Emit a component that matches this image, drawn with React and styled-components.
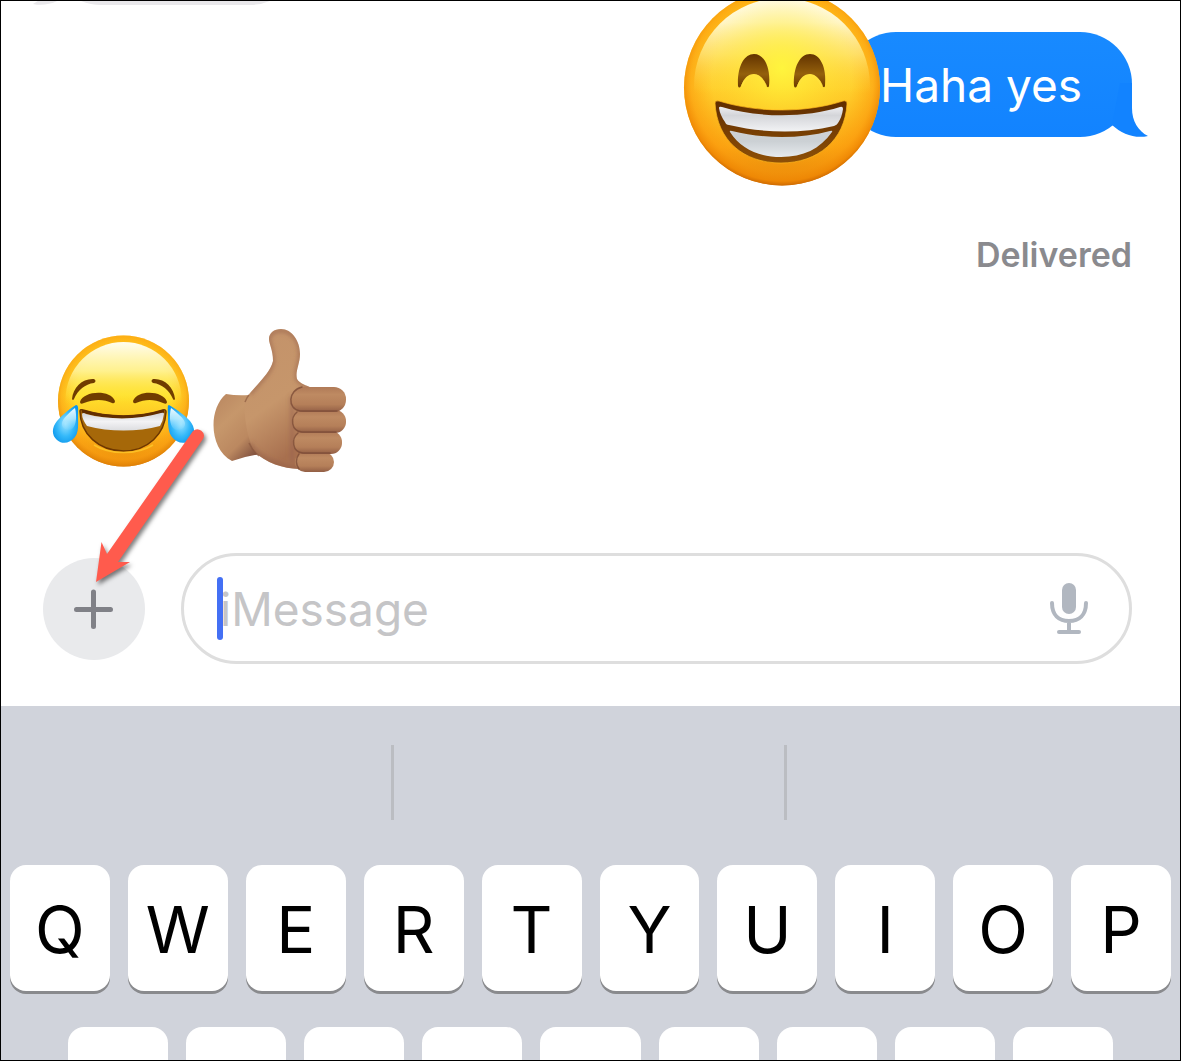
import React from "react";
import styled, { createGlobalStyle } from "styled-components";

const topRow = ["Q", "W", "E", "R", "T", "Y", "U", "I", "O", "P"];
const homeRow = ["A", "S", "D", "F", "G", "H", "J", "K", "L"];

const Tail = ({ color, incoming }) => (
  <TailSvg $incoming={incoming} viewBox="0 0 50 54" aria-hidden="true">
    <path
      fill={color}
      d="M20 0 H32 V25 C32 38 38 48 48 53 C35 56 22 51 12 42 Z"
    />
  </TailSvg>
);

const GrinningFace = () => (
  <Sticker viewBox="683 -11 198 198" role="img" aria-label="Grinning face">
    <defs>
      <linearGradient id="grinBase" x1="0" y1="0" x2="0" y2="1">
        <stop offset="0" stopColor="#ffc21a" />
        <stop offset="0.5" stopColor="#ffcf2c" />
        <stop offset="0.8" stopColor="#fbab16" />
        <stop offset="1" stopColor="#d87c08" />
      </linearGradient>
      <radialGradient id="grinEdge" cx="0.5" cy="0.47" r="0.54">
        <stop offset="0.66" stopColor="#ff9d0a" stopOpacity="0" />
        <stop offset="0.86" stopColor="#fb960a" stopOpacity="0.55" />
        <stop offset="0.94" stopColor="#f08804" stopOpacity="0.9" />
        <stop offset="1" stopColor="#c05c00" />
      </radialGradient>
      <linearGradient id="grinGlow" x1="0" y1="0" x2="0" y2="1">
        <stop offset="0" stopColor="#fffdf0" />
        <stop offset="0.14" stopColor="#fff9d0" stopOpacity="0.95" />
        <stop offset="0.32" stopColor="#fff08c" stopOpacity="0.65" />
        <stop offset="0.54" stopColor="#ffdc45" stopOpacity="0" />
      </linearGradient>
      <radialGradient id="grinWarm" cx="0.5" cy="0.4" r="0.38">
        <stop offset="0" stopColor="#fff83c" stopOpacity="0.9" />
        <stop offset="1" stopColor="#ffe230" stopOpacity="0" />
      </radialGradient>
      <linearGradient id="grinEye" x1="0" y1="0" x2="0" y2="1">
        <stop offset="0" stopColor="#623300" />
        <stop offset="0.6" stopColor="#94600c" />
        <stop offset="1" stopColor="#6b3900" />
      </linearGradient>
      <linearGradient id="grinMouth" x1="0" y1="0" x2="0" y2="1">
        <stop offset="0" stopColor="#602d00" />
        <stop offset="1" stopColor="#8e5007" />
      </linearGradient>
      <linearGradient id="grinUpper" x1="0" y1="0" x2="0" y2="1">
        <stop offset="0" stopColor="#eeeef1" />
        <stop offset="0.35" stopColor="#d4d5d9" />
        <stop offset="0.7" stopColor="#e4e5e8" />
        <stop offset="1" stopColor="#f2f3f5" />
      </linearGradient>
      <linearGradient id="grinLower" x1="0" y1="0" x2="0" y2="1">
        <stop offset="0" stopColor="#cfd1d4" />
        <stop offset="0.4" stopColor="#cbd0d4" />
        <stop offset="1" stopColor="#e6eaed" />
      </linearGradient>
    </defs>
    <circle cx="782" cy="87.5" r="98" fill="url(#grinBase)" />
    <circle cx="782" cy="87.5" r="98" fill="url(#grinEdge)" />
    <ellipse cx="782" cy="86" rx="88" ry="88" fill="url(#grinGlow)" />
    <circle cx="782" cy="87.5" r="98" fill="url(#grinWarm)" />
    <g fill="url(#grinEye)">
      <path d="M738 86 C737 67 744 54 754 54 C764 54 771 67 769 86 Q768 89 766 85 C763 78 759 74 754 74 C748 74 744 78 741 86 Q739 89 738 86 Z" />
      <path d="M794 86 C793 67 800 54 810 54 C820 54 827 67 825 86 Q824 89 822 85 C819 78 815 74 810 74 C804 74 800 78 797 86 Q795 89 794 86 Z" />
    </g>
    <path
      fill="none"
      stroke="#ffe23d"
      strokeWidth="2"
      strokeOpacity="0.8"
      d="M742 86 C748 72 760 72 766 86 M798 86 C804 72 816 72 822 86"
    />
    <path
      fill="url(#grinMouth)"
      stroke="#ffb81e"
      strokeOpacity="0.7"
      d="M715 103 Q715 100 719 101 C758 113 806 113 843 101 Q847 100 847 104 C845 140 818 163 781 163 C743 163 717 140 715 103 Z"
    />
    <path
      fill="url(#grinUpper)"
      d="M719 108 Q719 106 722 107 C758 118 806 118 840 107 Q843 106 843 109 Q842 117 838 123 Q837 125 834 126 C800 134 763 133 729 125 Q726 125 725 122 Q720 115 719 108 Z"
    />
    <path
      fill="url(#grinLower)"
      d="M730 132 Q729 130 732 131 C764 139 800 139 830 131 Q833 130 832 132 C820 149 803 157 781 157 C759 157 741 149 730 132 Z"
    />
  </Sticker>
);

const JoyFace = () => (
  <svg
    width="143"
    height="143"
    viewBox="52 329 143 143"
    role="img"
    aria-label="Face with tears of joy"
  >
    <defs>
      <linearGradient id="joyBase" x1="0" y1="0" x2="0" y2="1">
        <stop offset="0" stopColor="#ffc51c" />
        <stop offset="0.45" stopColor="#ffe12c" />
        <stop offset="0.75" stopColor="#fdb61c" />
        <stop offset="1" stopColor="#e08408" />
      </linearGradient>
      <radialGradient id="joyEdge" cx="0.5" cy="0.47" r="0.54">
        <stop offset="0.68" stopColor="#ff9d0a" stopOpacity="0" />
        <stop offset="0.88" stopColor="#fb9c10" stopOpacity="0.6" />
        <stop offset="1" stopColor="#d97a04" />
      </radialGradient>
      <linearGradient id="joyGlow" x1="0" y1="0" x2="0" y2="1">
        <stop offset="0" stopColor="#fffdf0" />
        <stop offset="0.25" stopColor="#fff8a8" stopOpacity="0.8" />
        <stop offset="0.54" stopColor="#ffe62e" stopOpacity="0" />
      </linearGradient>
      <linearGradient id="joyTeeth" x1="0" y1="0" x2="0" y2="1">
        <stop offset="0" stopColor="#d2d3d7" />
        <stop offset="0.5" stopColor="#f3f3f5" />
        <stop offset="1" stopColor="#dcdde0" />
      </linearGradient>
      <radialGradient id="joyTear" cx="0.5" cy="0.5" r="0.6">
        <stop offset="0" stopColor="#9ce3ff" />
        <stop offset="0.55" stopColor="#35b9fa" />
        <stop offset="1" stopColor="#0a95eb" />
      </radialGradient>
      <linearGradient id="tearShine" x1="0" y1="0" x2="0" y2="1">
        <stop offset="0" stopColor="#f2fcff" />
        <stop offset="0.5" stopColor="#c4efff" stopOpacity="0.8" />
        <stop offset="1" stopColor="#8bdcff" stopOpacity="0.2" />
      </linearGradient>
    </defs>
    <circle cx="123.5" cy="401" r="65.5" fill="url(#joyBase)" />
    <circle cx="123.5" cy="401" r="65.5" fill="url(#joyEdge)" />
    <ellipse cx="123.5" cy="400" rx="58" ry="58" fill="url(#joyGlow)" />
    <g fill="#703c00">
      <path d="M72 399 C73 387 83 378 94 379 Q97 381 94 383 C85 384 78 390 74 399 Q73 401 72 399 Z" />
      <path d="M175 399 C174 387 164 378 153 379 Q150 381 153 383 C162 384 169 390 173 399 Q174 401 175 399 Z" />
      <path d="M80 402 C83 391 110 389 115 401 Q115 404 112 403 C104 399 94 399 84 403 Q80 405 80 402 Z" />
      <path d="M133 401 C138 389 164 391 167 402 Q167 405 163 403 C154 399 145 399 136 403 Q133 404 133 401 Z" />
    </g>
    <path
      fill="#a66809"
      stroke="#6d3700"
      strokeWidth="1.5"
      d="M80 411 Q80 409 83 410 C109 418 138 418 163 410 Q166 409 166 412 C165 434 148 451 123.5 451 C99 451 80 434 80 411 Z"
    />
    <path
      fill="none"
      stroke="#612d00"
      strokeWidth="3"
      d="M82 411 C108 419 139 419 164 411"
    />
    <path
      fill="url(#joyTeeth)"
      d="M82 414 Q83 412 86 414 C109 420 138 420 161 413 Q164 412 164 414 Q163 421 160 426 C138 432 109 432 87 426 Q82 419 82 414 Z"
    />
    <path
      fill="none"
      stroke="#ffce2d"
      strokeOpacity="0.7"
      strokeWidth="1.5"
      d="M94 445 C110 455 137 455 153 445"
    />
    <g>
      <path
        fill="url(#joyTear)"
        d="M76 405 C79 405 78 410 78 415 C78 424 79 432 75 437 C70 443 63 445 57 440 C51 435 52 427 57 421 C63 414 71 408 76 405 Z"
      />
      <path
        fill="url(#tearShine)"
        d="M75 408 C77 416 76 425 73 428 C69 432 61 429 62 423 C63 418 70 412 75 408 Z"
      />
    </g>
    <g transform="translate(247 0) scale(-1 1)">
      <path
        fill="url(#joyTear)"
        d="M78 405 C80 405 79 410 79 415 C79 424 79 432 75 437 C70 443 63 445 57 440 C51 435 52 427 57 421 C63 414 73 408 78 405 Z"
      />
      <path
        fill="url(#tearShine)"
        d="M76 408 C78 416 77 425 74 428 C70 432 61 429 62 423 C63 418 71 412 76 408 Z"
      />
    </g>
  </svg>
);

const ThumbsUp = () => (
  <svg
    width="137"
    height="143"
    viewBox="211 329 137 143"
    role="img"
    aria-label="Thumbs up"
  >
    <defs>
      <linearGradient id="wrist" x1="0" y1="0" x2="0.7" y2="1">
        <stop offset="0" stopColor="#b98660" />
        <stop offset="0.4" stopColor="#c6976b" />
        <stop offset="0.75" stopColor="#bb8860" />
        <stop offset="1" stopColor="#855541" />
      </linearGradient>
      <linearGradient id="palm" x1="0" y1="0" x2="0.35" y2="1">
        <stop offset="0" stopColor="#c3926a" />
        <stop offset="0.6" stopColor="#c6966b" />
        <stop offset="1" stopColor="#a8704f" />
      </linearGradient>
      <linearGradient id="finger" x1="0" y1="0" x2="0" y2="1">
        <stop offset="0" stopColor="#b07a57" />
        <stop offset="0.3" stopColor="#be8a62" />
        <stop offset="0.7" stopColor="#b57f59" />
        <stop offset="1" stopColor="#925e45" />
      </linearGradient>
      <filter id="soften" x="-20%" y="-20%" width="140%" height="140%">
        <feGaussianBlur stdDeviation="2" />
      </filter>
      <clipPath id="hand">
        <path d="M245 399 C259 382 270 373 273 361 C273 350 269 344 269 339 C269 333 274 329 281 329 C292 329 300 341 300 354 C300 364 295 371 297 379 C300 384 306 385 312 388 L312 469 C295 470 275 468 258 455 C247 445 243 410 245 399 Z" />
      </clipPath>
    </defs>
    <path
      fill="url(#wrist)"
      d="M226 394 Q237 396 249 395 L262 454 Q246 456 232 461 C209 449 208 409 226 394 Z"
    />
    <path
      fill="url(#palm)"
      d="M245 399 C259 382 270 373 273 361 C273 350 269 344 269 339 C269 333 274 329 281 329 C292 329 300 341 300 354 C300 364 295 371 297 379 C300 384 306 385 312 388 L312 469 C295 470 275 468 258 455 C247 445 243 410 245 399 Z"
    />
    <g clipPath="url(#hand)" fill="none" stroke="#95604a" filter="url(#soften)">
      <path
        strokeWidth="3"
        strokeOpacity="0.75"
        d="M250 394 C260 382 271 373 273 361 C273 350 268 343 269 337 C275 325 300 329 300 354 C300 364 295 371 297 379 C300 384 306 385 312 388"
      />
      <path
        strokeWidth="6"
        strokeOpacity="0.6"
        d="M249 444 C257 457 276 468 300 469"
      />
      <path strokeWidth="4" strokeOpacity="0.5" d="M292 396 V462" />
    </g>
    <path
      fill="none"
      stroke="#8a573d"
      strokeOpacity="0.65"
      strokeWidth="1.5"
      d="M249 395 Q247 397 245 402 M249 443 Q252 450 259 456"
    />
    <g fill="url(#finger)">
      <rect x="295" y="452" width="39" height="20" rx="10" />
      <rect x="293" y="431" width="49" height="23" rx="11" />
      <rect x="292" y="410" width="54" height="23" rx="11" />
      <rect x="291" y="387" width="55" height="25" rx="12" />
    </g>
    <g
      fill="none"
      stroke="#7a4a36"
      strokeOpacity="0.75"
      strokeWidth="1.5"
      strokeLinecap="round"
    >
      <path d="M302 387 C288 390 287 409 300 411 H337" />
      <path d="M297 412 C290 418 291 431 302 432 H336" />
      <path d="M298 433 C291 439 292 452 303 453 H330" />
      <path d="M299 454 C295 459 296 465 299 469" />
    </g>
  </svg>
);

const PlusIcon = () => (
  <svg width="42" height="42" viewBox="0 0 42 42" aria-hidden="true">
    <path
      d="M20.500 4 V38.500 M3.500 21.500 H37.500"
      stroke="#808187"
      strokeWidth="5"
      strokeLinecap="round"
    />
  </svg>
);

const MicIcon = () => (
  <svg width="40" height="54" viewBox="0 0 40 54" aria-hidden="true">
    <rect x="13" y="1" width="14" height="31" rx="7" fill="#b1b7c0" />
    <path
      fill="none"
      stroke="#b1b7c0"
      strokeWidth="4"
      strokeLinecap="round"
      d="M3 21 C3 33 10 39 20 39 C30 39 37 33 37 21 M20 39 V50 M10 50 H30"
    />
  </svg>
);

const Arrow = () => (
  <ArrowSvg viewBox="86 420 130 180" aria-hidden="true">
    <path
      fill="#ff5b4d"
      d="M107 554 L193 431 A6.500 6.500 0 0 1 203 439 L118 562 L130 562 L96 582 L101.500 542 Z"
    />
  </ArrowSvg>
);

const App = () => {
  return (
    <>
      <GlobalStyle />
      <Screen>
        <Thread>
          <Bubble $incoming>
            <Tail color="#e9e8eb" incoming />
          </Bubble>
          <Bubble>
            Haha yes
            <Tail color="#1283ff" />
            <GrinningFace />
          </Bubble>
          <Status>Delivered</Status>
          <EmojiRow>
            <JoyFace />
            <ThumbsUp />
          </EmojiRow>
        </Thread>
        <Composer>
          <PlusButton type="button" aria-label="Add attachment">
            <PlusIcon />
            <Arrow />
          </PlusButton>
          <MessageBox>
            <Caret />
            <MessageInput
              type="text"
              placeholder="iMessage"
              aria-label="iMessage"
            />
            <MicButton type="button" aria-label="Dictate">
              <MicIcon />
            </MicButton>
          </MessageBox>
        </Composer>
        <Keyboard>
          <Suggestions>
            <Suggestion />
            <Suggestion />
            <Suggestion />
          </Suggestions>
          <KeyRow>
            {topRow.map((letter) => (
              <Key type="button" key={letter}>
                {letter}
              </Key>
            ))}
          </KeyRow>
          <KeyRow $inset>
            {homeRow.map((letter) => (
              <Key type="button" key={letter} aria-label={letter} />
            ))}
          </KeyRow>
        </Keyboard>
      </Screen>
    </>
  );
};

const GlobalStyle = createGlobalStyle`
  * {
    box-sizing: border-box;
  }
  body {
    margin: 0;
    background-color: white;
    font-family: Inter, "Liberation Sans", sans-serif;
  }
  button {
    font-family: inherit;
    border: none;
    padding: 0;
  }
`;

const Screen = styled.main`
  display: flex;
  flex-direction: column;
  height: 100vh;
  border: 1px solid black;
  overflow: hidden;
`;

const Thread = styled.section`
  display: flex;
  flex-direction: column;
  flex-shrink: 0;
  /* older messages are scrolled off the top */
  margin-top: -101px;
  padding: 0 48px;
`;

const Bubble = styled.div`
  position: relative;
  display: flex;
  align-items: center;
  align-self: ${(props) => (props.$incoming ? "flex-start" : "flex-end")};
  width: ${(props) => (props.$incoming ? "253px" : "auto")};
  height: 105px;
  margin-bottom: 27px;
  padding: 0 50px 0 36px;
  border-radius: 52px;
  background: ${(props) =>
    props.$incoming ? "#e9e8eb" : "linear-gradient(#188aff, #1283ff)"};
  color: white;
  font-size: 46px;
  line-height: 60px;
`;

const TailSvg = styled.svg`
  position: absolute;
  bottom: 0;
  width: 50px;
  height: 54px;
  ${(props) =>
    props.$incoming ? "left: -18px; transform: scaleX(-1);" : "right: -18px;"}
`;

const Sticker = styled.svg`
  position: absolute;
  right: 251px;
  bottom: -50px;
  width: 198px;
  height: 198px;
`;

const Status = styled.p`
  align-self: flex-end;
  margin: 71px 0 54px;
  color: #8a8a8e;
  font-size: 34px;
  font-weight: 600;
  line-height: 40px;
`;

const EmojiRow = styled.div`
  display: flex;
  gap: 16px;
  padding-left: 3px;
`;

const Composer = styled.form`
  display: flex;
  align-items: center;
  gap: 36px;
  flex-shrink: 0;
  padding: 81px 48px 42px 42px;
`;

const PlusButton = styled.button`
  position: relative;
  display: flex;
  align-items: center;
  justify-content: center;
  flex-shrink: 0;
  width: 102px;
  height: 102px;
  border-radius: 50%;
  background-color: #e9eaec;
`;

const ArrowSvg = styled.svg`
  position: absolute;
  left: 43px;
  top: -138px;
  width: 130px;
  height: 180px;
  filter: drop-shadow(2px 3px 2px rgba(0, 0, 0, 0.5));
  pointer-events: none;
`;

const MessageBox = styled.div`
  display: flex;
  align-items: center;
  flex: 1;
  min-width: 0;
  height: 111px;
  padding: 0 40px 0 33px;
  border: 3px solid #dedede;
  border-radius: 56px;
`;

const Caret = styled.span`
  position: relative;
  flex-shrink: 0;
  width: 6px;
  height: 63px;
  margin-right: -3px;
  border-radius: 3px;
  background-color: #4470f4;
`;

const MessageInput = styled.input`
  flex: 1;
  min-width: 0;
  height: 64px;
  padding: 0;
  border: none;
  outline: none;
  background: transparent;
  color: black;
  font-family: inherit;
  font-size: 46px;
  &::placeholder {
    color: #c5c5c7;
    opacity: 1;
  }
`;

const MicButton = styled.button`
  display: flex;
  background: transparent;
`;

const Keyboard = styled.section`
  flex-shrink: 0;
  background-color: #d0d3db;
`;

const Suggestions = styled.div`
  display: grid;
  grid-template-columns: repeat(3, 1fr);
  padding: 39px 0 45px;
`;

const Suggestion = styled.div`
  height: 75px;
  border-right: 3px solid #bbbdc2;
  &:last-child {
    border-right: none;
  }
`;

const KeyRow = styled.div`
  display: flex;
  gap: 18px;
  margin-bottom: 36px;
  padding: 0 ${(props) => (props.$inset ? "67px" : "9px")};
`;

const Key = styled.button`
  flex: 1;
  min-width: 0;
  height: 126px;
  padding-top: 3px;
  border-radius: 16px;
  background-color: white;
  box-shadow: 0 3px 0 #898a8d;
  color: black;
  font-size: 65px;
  line-height: 80px;
`;

export default App;
